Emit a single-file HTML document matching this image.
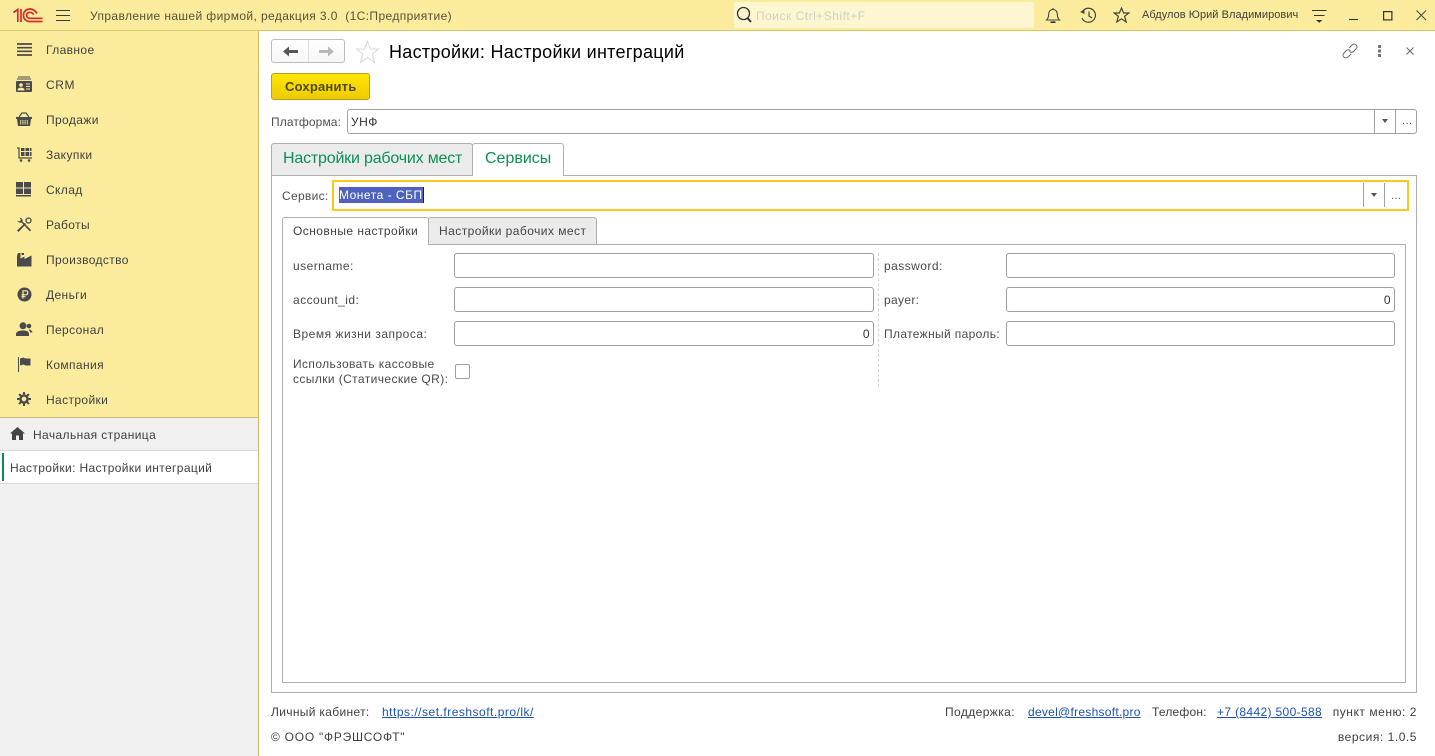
<!DOCTYPE html>
<html lang="ru">
<head>
<meta charset="utf-8">
<title>Настройки интеграций</title>
<style>
html,body{margin:0;padding:0;width:1435px;height:756px;overflow:hidden;background:#fff}
body{font-family:"Liberation Sans",Arial,sans-serif;font-size:12px;color:#4a4a4a;position:relative;letter-spacing:.42px}
.a{position:absolute;box-sizing:border-box}
.t{position:absolute;white-space:nowrap;line-height:14px}
.nav{position:absolute;left:46px;color:#3f3f3f;white-space:nowrap;line-height:14px;letter-spacing:.38px}
.in{position:absolute;box-sizing:border-box;background:#fff;border:1px solid #a0a0a0;border-radius:3px;height:25px}
.num{position:absolute;right:3px;top:5px;line-height:14px;color:#333}
a{color:#1c52b5;text-decoration:underline}
svg{position:absolute;display:block}
</style>
</head>
<body>

<!-- top bar -->
<div class="a" style="left:0;top:0;width:1435px;height:31px;background:#fbec9d;border-bottom:1px solid #d9c86c"></div>
<svg style="left:13px;top:8px" width="30" height="15" viewBox="0 0 30 15"><g fill="none" stroke="#d8272d" stroke-width="1.700"><path d="M.5 4.500 4.800 1.500V14M8 1V14"/><path d="M24 5.500C22.500 2.500 19.500 1 17 1 13 1 10.500 3.700 10.500 7.200 10.500 10.700 13 13.500 17 13.500H29.500"/><path d="M20.700 6.700C19.700 5 18.500 4.300 17 4.300 15 4.300 13.700 5.500 13.700 7.200 13.700 8.900 15 10.300 17 10.300H29.500"/></g></svg>
<svg style="left:56px;top:10px" width="14" height="12" viewBox="0 0 14 12"><path d="M0 .5H14M0 5.500H14M0 10.500H14" stroke="#3a3a3a" stroke-width="1"/></svg>
<div class="t" style="left:90px;top:9px;color:#54513a;letter-spacing:.39px">Управление нашей фирмой, редакция 3.0&nbsp; (1С:Предприятие)</div>

<div class="a" style="left:734px;top:2px;width:300px;height:26px;background:#fdf6d0;border-radius:2px"></div>
<svg style="left:736px;top:6px" width="17" height="18" viewBox="0 0 17 18"><circle cx="7.500" cy="7.500" r="6" fill="none" stroke="#333" stroke-width="1.300"/><path d="M11.500 12 15 16" stroke="#333" stroke-width="2"/></svg>
<div class="t" style="left:756px;top:9px;color:#cfcfc4;letter-spacing:.5px">Поиск Ctrl+Shift+F</div>

<svg style="left:1045px;top:7px" width="16" height="17" viewBox="0 0 16 17"><path d="M1.500 13H14.500C12.500 11 12.500 9.500 12.300 7 12 4 10.500 2.500 8 2.500 5.500 2.500 4 4 3.700 7 3.500 9.500 3.500 11 1.500 13ZM8 1V2.500" fill="none" stroke="#444" stroke-width="1.100"/><path d="M5.500 15.200H10.500" stroke="#333" stroke-width="1.600"/></svg>
<svg style="left:1079px;top:7px" width="18" height="17" viewBox="0 0 18 17"><path d="M3.500 4.500A7 7 0 1 1 3 11" fill="none" stroke="#444" stroke-width="1.200"/><path d="M1 5 5.500 2.500 5.500 7Z" fill="#444"/><path d="M10 4.500V9L13 11" fill="none" stroke="#444" stroke-width="1.200"/></svg>
<svg style="left:1113px;top:7px" width="17" height="16" viewBox="0 0 17 16"><path d="M8.500 1 10.600 6H15.800L11.600 9.300 13.200 15 8.500 11.800 3.800 15 5.400 9.300 1.200 6H6.400Z" fill="none" stroke="#444" stroke-width="1.200"/></svg>
<div class="t" style="left:1142px;top:8px;font-size:11px;color:#3f3f3f;letter-spacing:.05px">Абдулов Юрий Владимирович</div>
<svg style="left:1312px;top:9px" width="15" height="14" viewBox="0 0 15 14"><path d="M0 1.500H14.500M2 6.500H12.500" stroke="#333" stroke-width="1"/><path d="M4 11H10.500L7.250 13.800Z" fill="#333"/></svg>
<svg style="left:1349px;top:18px" width="10" height="3" viewBox="0 0 10 3"><path d="M0 1.500H9" stroke="#333" stroke-width="1.100"/></svg>
<svg style="left:1383px;top:11px" width="10" height="10" viewBox="0 0 10 10"><rect x=".6" y=".6" width="8.300" height="8.300" fill="none" stroke="#333" stroke-width="1.200"/></svg>
<svg style="left:1416px;top:10px" width="11" height="11" viewBox="0 0 11 11"><path d="M.5 .5 10 10M10 .5 .5 10" stroke="#444" stroke-width="1"/></svg>

<!-- sidebar -->
<div class="a" style="left:0;top:31px;width:259px;height:387px;background:#fbec9d;border-right:1px solid #cdbb66;border-bottom:1px solid #c9b868"></div>
<div class="a" style="left:0;top:418px;width:259px;height:338px;background:#f0f0f0;border-right:1px solid #cdbb66"></div>
<div class="a" style="left:258px;top:31px;width:1px;height:725px;background:#cdbb66"></div>

<svg style="left:17px;top:43px" width="15" height="13" viewBox="0 0 15 13"><path d="M0 1H15M0 4.700H15M0 8.300H15M0 12H15" stroke="#4a4a4a" stroke-width="1.700"/></svg>
<div class="nav" style="top:43px">Главное</div>
<svg style="left:16px;top:76px" width="16" height="16" viewBox="0 0 16 16"><path d="M2 1H14M1 3H15" stroke="#4a4a4a" stroke-width="1"/><rect y="5" width="16" height="11" rx="1" fill="#4a4a4a"/><circle cx="5" cy="9" r="1.800" fill="#fbec9d"/><path d="M2 14C2 11.500 8 11.500 8 14ZM10 8H14M10 10.500H14M10 13H14" fill="#fbec9d" stroke="#fbec9d"/></svg>
<div class="nav" style="top:78px;letter-spacing:.6px">CRM</div>
<svg style="left:16px;top:112px" width="16" height="14" viewBox="0 0 16 14"><path d="M3 5 6 1H10L13 5" fill="none" stroke="#4a4a4a" stroke-width="1.200"/><path d="M0 5H16V7H15L14 14H2L1 7H0Z" fill="#4a4a4a"/><path d="M4.500 8V12.500M8 8V12.500M11.500 8V12.500M6.200 8V12.500M9.800 8V12.500" stroke="#fbec9d" stroke-width=".7"/></svg>
<div class="nav" style="top:113px">Продажи</div>
<svg style="left:16px;top:147px" width="16" height="15" viewBox="0 0 16 15"><path d="M1 1H3V11H16" fill="none" stroke="#4a4a4a" stroke-width="1.200"/><path d="M5 1H8.500V4H5ZM9.500 1H13V4H9.500ZM5 5H8.500V9H5ZM9.500 5H13V9H9.500ZM13.800 1H15.500V4H13.800ZM13.800 5H15.500V9H13.800Z" fill="#4a4a4a"/><circle cx="5" cy="13.500" r="1.300" fill="#4a4a4a"/><circle cx="13" cy="13.500" r="1.300" fill="#4a4a4a"/></svg>
<div class="nav" style="top:148px">Закупки</div>
<svg style="left:16px;top:182px" width="15" height="15" viewBox="0 0 15 15"><path d="M0 0H7V5.500H0ZM8 0H15V5.500H8ZM0 6.500H7V12H0ZM8 6.500H15V12H8ZM0 13H15V14.500H0Z" fill="#4a4a4a"/></svg>
<div class="nav" style="top:183px">Склад</div>
<svg style="left:16px;top:217px" width="16" height="16" viewBox="0 0 16 16"><path d="M1 3.500C2 5.500 4 6 5.500 5.500L14 14.500 15 13 6.500 4.500C7 3 6 1 3.500 .5L5 3 3 4.500Z" fill="#4a4a4a"/><path d="M1 13.500 9 6 10 7 2.500 15Z" fill="#4a4a4a"/><circle cx="12.500" cy="3.500" r="2.500" fill="none" stroke="#4a4a4a" stroke-width="1.300"/></svg>
<div class="nav" style="top:218px">Работы</div>
<svg style="left:17px;top:252px" width="15" height="15" viewBox="0 0 15 15"><path d="M0 14.500V4L1 1H3.500V6.500L7.500 4.500V7L14.500 3.500V14.500Z" fill="#4a4a4a"/><path d="M4.500 1H7V3H4.500Z" fill="#4a4a4a"/></svg>
<div class="nav" style="top:253px">Производство</div>
<svg style="left:17px;top:287px" width="15" height="15" viewBox="0 0 15 15"><circle cx="7.500" cy="7.500" r="7" fill="#4a4a4a"/><path d="M6 11.500V3.800H9C10.300 3.800 10.800 4.800 10.800 5.800 10.800 6.800 10.300 7.800 9 7.800H4.500M4.500 9.700H8.500" fill="none" stroke="#fbec9d" stroke-width="1.200"/></svg>
<div class="nav" style="top:288px">Деньги</div>
<svg style="left:16px;top:322px" width="17" height="14" viewBox="0 0 17 14"><circle cx="7" cy="3.800" r="3.500" fill="#4a4a4a"/><path d="M0 14V11.500C1 9 4 8.500 7 8.500 10 8.500 12.500 9 13 11.500V14Z" fill="#4a4a4a"/><circle cx="13" cy="4" r="2.300" fill="#4a4a4a"/><path d="M12.500 7.500C14.500 7.500 16 8.500 16.500 10.500H14.500Z" fill="#4a4a4a"/></svg>
<div class="nav" style="top:323px">Персонал</div>
<svg style="left:18px;top:357px" width="13" height="15" viewBox="0 0 13 15"><path d="M0 0H1V15H0Z" fill="#4a4a4a"/><path d="M2 1.500 5.500 .5 7.500 1.500H12.500V8.500H7.500L5.500 7.500 2 8.500Z" fill="#4a4a4a"/></svg>
<div class="nav" style="top:358px">Компания</div>
<svg style="left:17px;top:392px" width="14" height="14" viewBox="0 0 15 15"><circle cx="7.500" cy="7.500" r="3.800" fill="none" stroke="#4a4a4a" stroke-width="2.600"/><path d="M7.500 0V15M0 7.500H15M2.200 2.200 12.800 12.800M12.800 2.200 2.200 12.800" stroke="#4a4a4a" stroke-width="2.200" stroke-dasharray="2.600 9.800 2.600"/></svg>
<div class="nav" style="top:393px">Настройки</div>

<svg style="left:10px;top:427px" width="15" height="13" viewBox="0 0 15 13"><path d="M7.500 0 15 6.500H13V13H9V8.500H6V13H2V6.500H0Z" fill="#444"/></svg>
<div class="t" style="left:33px;top:428px;color:#3f3f3f;letter-spacing:.39px">Начальная страница</div>
<div class="a" style="left:0;top:450px;width:258px;height:34px;background:#fff;border-top:1px solid #d8d8d8;border-bottom:1px solid #d8d8d8"></div>
<div class="a" style="left:2px;top:453px;width:2px;height:28px;background:#0a8a4c"></div>
<div class="t" style="left:10px;top:461px;color:#3f3f3f;letter-spacing:.36px">Настройки: Настройки интеграций</div>

<!-- form header -->
<div class="a" style="left:271px;top:39px;width:74px;height:24px;background:linear-gradient(#fff,#f7f7f7);border:1px solid #bdbdbd;border-radius:3px"></div>
<div class="a" style="left:308px;top:40px;width:1px;height:22px;background:#dedede"></div>
<svg style="left:283px;top:46px" width="15" height="11" viewBox="0 0 15 11"><path d="M0 5.500 6 .5V4H15V7H6V10.500Z" fill="#555"/></svg>
<svg style="left:319px;top:46px" width="15" height="11" viewBox="0 0 15 11"><path d="M15 5.500 9 .5V4H0V7H9V10.500Z" fill="#b8b8b8"/></svg>
<svg style="left:355px;top:40px" width="25" height="24" viewBox="0 0 25 24"><path d="M12.500 1.500 15.500 9H23.500L17.200 14 19.500 22.500 12.500 17.500 5.500 22.500 7.800 14 1.500 9H9.500Z" fill="none" stroke="#d8d8d8" stroke-width="1"/></svg>
<div class="t" style="left:389px;top:41px;font-size:18px;line-height:22px;color:#000;letter-spacing:.29px">Настройки: Настройки интеграций</div>

<svg style="left:1342px;top:43px" width="16" height="16" viewBox="0 0 16 16"><g fill="none" stroke="#666" stroke-width="1"><path d="M7 5 10 2C11.300 .8 13 .8 14.200 2 15.300 3.200 15.300 4.800 14 6L11.500 8.500C10.300 9.700 8.500 9.500 7.500 8.300"/><path d="M9 11 6 14C4.700 15.200 3 15.200 1.800 14 .7 12.800 .7 11.200 2 10L4.500 7.500C5.700 6.300 7.500 6.500 8.500 7.700"/></g></svg>
<svg style="left:1378px;top:45px" width="3" height="12" viewBox="0 0 3 12"><path d="M0 0H3V3H0ZM0 4.500H3V7.500H0ZM0 9H3V12H0Z" fill="#777"/></svg>
<svg style="left:1406px;top:47px" width="8" height="8" viewBox="0 0 8 8"><path d="M.5 .5 7.500 7.500M7.500 .5 .5 7.500" stroke="#666" stroke-width="1"/></svg>

<div class="a" style="left:271px;top:73px;width:99px;height:27px;background:linear-gradient(#ffe600,#eecb00);border:1px solid #b9a11b;border-radius:3px"></div>
<div class="t" style="left:285px;top:80px;font-size:13px;font-weight:bold;color:#4d4a10;letter-spacing:.2px">Сохранить</div>

<!-- platform -->
<div class="t" style="left:271px;top:115px;color:#4e4e4e;letter-spacing:.1px">Платформа:</div>
<div class="in" style="left:347px;top:109px;width:1070px">
  <div class="t" style="left:3px;top:5px;color:#333;letter-spacing:.5px">УНФ</div>
  <div class="a" style="left:1026px;top:0;width:1px;height:23px;background:#a0a0a0"></div>
  <div class="a" style="left:1047px;top:0;width:1px;height:23px;background:#a0a0a0"></div>
  <svg style="left:1034px;top:9px" width="6" height="5" viewBox="0 0 6 5"><path d="M0 0H6L3 4Z" fill="#555"/></svg>
  <div class="t" style="left:1054px;top:4px;color:#555;font-size:11px">...</div>
</div>

<!-- main tabs -->
<div class="a" style="left:271px;top:143px;width:202px;height:33px;background:#ebebeb;border:1px solid #b0b0b0;border-radius:3px 3px 0 0"></div>
<div class="t" style="left:283px;top:149px;font-size:16px;line-height:19px;color:#0a9150;letter-spacing:-.19px">Настройки рабочих мест</div>
<div class="a" style="left:271px;top:175px;width:1146px;height:518px;border:1px solid #b0b0b0;background:#fff"></div>
<div class="a" style="left:472px;top:143px;width:92px;height:33px;background:#fff;border:1px solid #b0b0b0;border-bottom:0;border-radius:3px 3px 0 0"></div>
<div class="t" style="left:485px;top:149px;font-size:16px;line-height:19px;color:#0a9150;letter-spacing:0">Сервисы</div>

<!-- service -->
<div class="t" style="left:282px;top:189px;color:#4e4e4e;letter-spacing:.3px">Сервис:</div>
<div class="a" style="left:332px;top:180px;width:1077px;height:31px;border:2px solid #fbc91e;background:#fff"></div>
<div class="t" style="left:339px;top:187px;height:16px;line-height:16px;background:#4f62c0;color:#fff;box-shadow:1px 0 0 #222;letter-spacing:.5px">Монета - СБП</div>
<div class="a" style="left:1363px;top:183px;width:1px;height:24px;background:#a0a0a0"></div>
<div class="a" style="left:1384px;top:183px;width:1px;height:24px;background:#a0a0a0"></div>
<svg style="left:1371px;top:193px" width="6" height="5" viewBox="0 0 6 5"><path d="M0 0H6L3 4Z" fill="#555"/></svg>
<div class="t" style="left:1391px;top:189px;color:#555;font-size:11px">...</div>

<!-- inner tabs -->
<div class="a" style="left:428px;top:217px;width:169px;height:28px;background:#ebebeb;border:1px solid #b0b0b0;border-radius:3px 3px 0 0"></div>
<div class="t" style="left:439px;top:224px;color:#454545;letter-spacing:.45px">Настройки рабочих мест</div>
<div class="a" style="left:282px;top:244px;width:1124px;height:439px;border:1px solid #b0b0b0;background:#fff"></div>
<div class="a" style="left:282px;top:217px;width:147px;height:28px;background:#fff;border:1px solid #b0b0b0;border-bottom:0;border-radius:3px 3px 0 0"></div>
<div class="t" style="left:293px;top:224px;color:#3f3f3f;letter-spacing:.45px">Основные настройки</div>

<!-- fields -->
<div class="t" style="left:293px;top:259px;letter-spacing:.45px">username:</div>
<div class="in" style="left:454px;top:253px;width:420px"></div>
<div class="t" style="left:293px;top:293px;letter-spacing:.45px">account_id:</div>
<div class="in" style="left:454px;top:287px;width:420px"></div>
<div class="t" style="left:293px;top:327px;letter-spacing:.5px">Время жизни запроса:</div>
<div class="in" style="left:454px;top:321px;width:420px"><div class="num">0</div></div>
<div class="t" style="left:293px;top:357px;line-height:15px;letter-spacing:.4px">Использовать кассовые<br>ссылки (Статические QR):</div>
<div class="a" style="left:455px;top:364px;width:15px;height:15px;border:1px solid #a0a0a0;border-radius:2px;background:#fff"></div>
<div class="a" style="left:878px;top:253px;width:0;height:134px;border-left:1px dashed #d2d2d2"></div>
<div class="t" style="left:884px;top:259px;letter-spacing:.45px">password:</div>
<div class="in" style="left:1006px;top:253px;width:389px"></div>
<div class="t" style="left:884px;top:293px;letter-spacing:.33px">payer:</div>
<div class="in" style="left:1006px;top:287px;width:389px"><div class="num">0</div></div>
<div class="t" style="left:884px;top:327px;letter-spacing:.35px">Платежный пароль:</div>
<div class="in" style="left:1006px;top:321px;width:389px"></div>

<!-- footer -->
<div class="t" style="left:271px;top:705px;color:#3f3f3f;letter-spacing:.33px">Личный кабинет:</div>
<a class="t" style="left:382px;top:705px;letter-spacing:.5px" href="#">https://set.freshsoft.pro/lk/</a>
<div class="t" style="left:271px;top:730px;color:#3f3f3f;letter-spacing:.75px">© ООО "ФРЭШСОФТ"</div>
<div class="t" style="left:945px;top:705px;color:#3f3f3f;letter-spacing:.4px">Поддержка:</div>
<a class="t" style="left:1028px;top:705px;letter-spacing:.27px" href="#">devel@freshsoft.pro</a>
<div class="t" style="left:1152px;top:705px;color:#3f3f3f;letter-spacing:.2px">Телефон:</div>
<a class="t" style="left:1217px;top:705px;letter-spacing:.35px" href="#">+7 (8442) 500-588</a>
<div class="t" style="right:18px;top:705px;color:#3f3f3f;letter-spacing:.54px">пункт меню: 2</div>
<div class="t" style="right:18px;top:730px;color:#3f3f3f;letter-spacing:.54px">версия: 1.0.5</div>

</body>
</html>
